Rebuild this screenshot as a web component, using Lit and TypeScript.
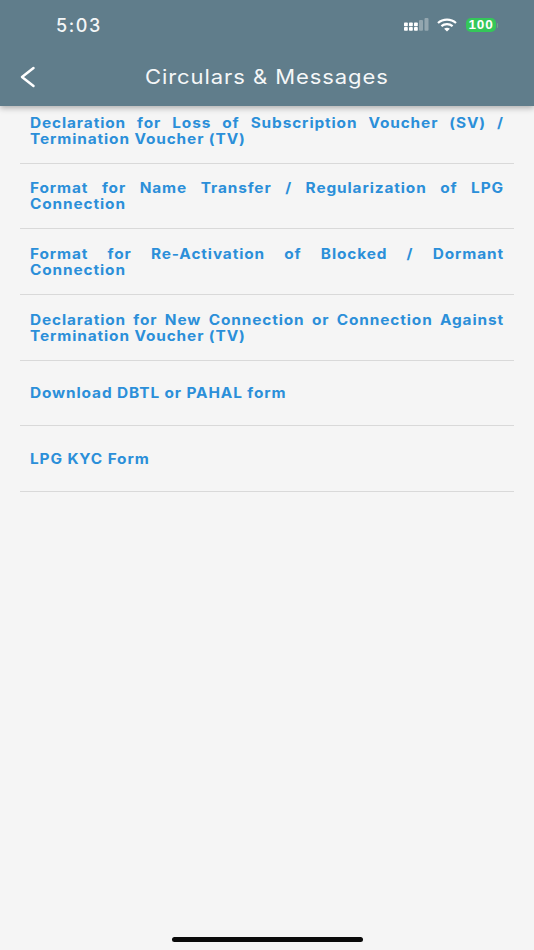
import { LitElement, html, css, svg } from "lit";
import { customElement } from "lit/decorators.js";

const ITEMS = [
  "Declaration for Loss of Subscription Voucher (SV) / Termination Voucher (TV)",
  "Format for Name Transfer / Regularization of LPG Connection",
  "Format for Re-Activation of Blocked / Dormant Connection",
  "Declaration for New Connection or Connection Against Termination Voucher (TV)",
  "Download DBTL or PAHAL form",
  "LPG KYC Form",
];

@customElement("app-root")
export class AppRoot extends LitElement {
  static styles = css`
    :host {
      display: flex;
      flex-direction: column;
      width: 534px;
      height: 950px;
      overflow: hidden;
      position: relative;
      background: #f5f5f5;
      font-family: "Inter", "Liberation Sans", sans-serif;
    }
    .header {
      height: 106px;
      flex: none;
      background: #607d8b;
      box-shadow: 0 2px 6px rgba(0, 0, 0, 0.3);
      display: flex;
      flex-direction: column;
      color: #fff;
      position: relative;
      z-index: 1;
    }
    .status {
      height: 50px;
      display: flex;
      align-items: center;
      justify-content: space-between;
      padding: 0 38px 0 56px;
    }
    .time {
      font-size: 18px;
      font-weight: 500;
      letter-spacing: 1.6px;
      color: #f4f6f7;
    }
    .status-icons {
      display: flex;
      align-items: center;
      gap: 8px;
    }
    .battery {
      position: relative;
      margin-left: 1px;
      background: #34c759;
      border-radius: 5px;
      color: #fff;
      width: 30px;
      height: 14px;
      font-size: 13.5px;
      font-weight: 700;
      line-height: 14px;
      text-align: center;
      font-family: "Liberation Sans", sans-serif;
      letter-spacing: 0.9px;
    }
    .battery::after {
      content: "";
      position: absolute;
      right: -2px;
      top: 4.5px;
      width: 1.5px;
      height: 5px;
      border-radius: 0 2px 2px 0;
      background: #6fa58a;
    }
    .nav {
      flex: 1;
      display: flex;
      align-items: center;
      justify-content: center;
      position: relative;
      padding-bottom: 2px;
    }
    .back {
      position: absolute;
      left: 19px;
      top: 14px;
    }
    .title {
      font-size: 20px;
      font-weight: 400;
      letter-spacing: 0.85px;
      color: #f5f7f8;
      transform: scaleX(1.1);
    }
    .list {
      display: flex;
      flex-direction: column;
      padding: 0 20px;
    }
    .row {
      height: 65.67px;
      width: 494px;
      box-sizing: border-box;
      display: flex;
      align-items: center;
      padding: 1px 10px 0;
      border-bottom: 1px solid #d9d9d9;
      color: #2b8fd9;
      font-size: 14px;
      font-weight: 700;
      line-height: 16px;
      letter-spacing: 0.8px;
      text-align: justify;
    }
    .row:first-child {
      height: 57.67px;
      padding: 0 10px 7px;
    }
    .row span {
      display: block;
      flex: none;
      width: 430.9px;
      transform: scaleX(1.1);
      transform-origin: left center;
    }
    .home {
      position: absolute;
      left: 172px;
      bottom: 8px;
      width: 191px;
      height: 5px;
      border-radius: 3px;
      background: #0a0a0a;
    }
  `;

  private signal() {
    const dots: [number, number][] = [
      [0, 4.5], [0, 9], [5, 4.5], [5, 9], [10, 4.5], [10, 9],
    ];
    return svg`<svg width="25" height="14" viewBox="0 0 25 14">
      ${dots.map(([x, y]) => svg`<rect x=${x} y=${y} width="3.8" height="3.8" rx="0.8" fill="#fff"></rect>`)}
      <rect x="15" y="2" width="4" height="10.8" rx="1" fill="#93a6af"></rect>
      <rect x="20.5" y="0" width="4" height="12.8" rx="1" fill="#93a6af"></rect>
    </svg>`;
  }

  private wifi() {
    return svg`<svg width="20" height="14" viewBox="0 0 20 14" fill="none" stroke="#fff" stroke-width="2.2">
      <path d="M1 5 C6 0.4 14 0.4 19 5"></path>
      <path d="M4.4 8.2 C7.6 5.4 12.4 5.4 15.6 8.2"></path>
      <path d="M10 13.6 L7.1 10.8 C8.8 9.4 11.2 9.4 12.9 10.8 Z" fill="#fff" stroke="none"></path>
    </svg>`;
  }

  render() {
    return html`
      <div class="header">
        <div class="status">
          <span class="time">5:03</span>
          <div class="status-icons">
            ${this.signal()} ${this.wifi()}
            <div class="battery">100</div>
          </div>
        </div>
        <div class="nav">
          <svg class="back" width="18" height="24" viewBox="0 0 18 24" fill="none" stroke="#fff" stroke-width="2.5" stroke-linecap="round" stroke-linejoin="round">
            <path d="M14.5 4 L3 13 L14.5 22"></path>
          </svg>
          <span class="title">Circulars &amp; Messages</span>
        </div>
      </div>
      <div class="list">
        ${ITEMS.map((t) => html`<div class="row"><span>${t}</span></div>`)}
      </div>
      <div class="home"></div>
    `;
  }
}
